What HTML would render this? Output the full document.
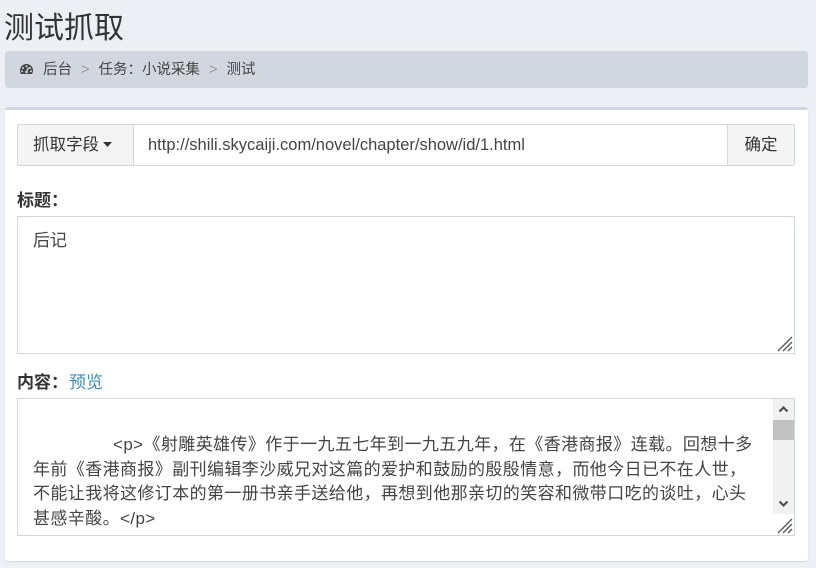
<!DOCTYPE html>
<html><head><meta charset="utf-8"><style>
*{box-sizing:border-box;margin:0;padding:0}
body{width:816px;height:568px;background:#ecf0f5;font-family:"Liberation Sans","Noto Sans CJK SC",sans-serif;color:#333;position:relative;overflow:hidden}
h1{position:absolute;left:4px;top:10px;font-size:30px;font-weight:normal;color:#333;line-height:38px}
.bc{position:absolute;left:5px;top:51px;width:803px;height:37px;background:#d2d6de;border-radius:3px;font-size:14.5px;color:#444;line-height:39px;padding-left:14px}
.bc .sep{color:#999;margin:0 9px}
.box{position:absolute;left:5px;top:107px;width:803px;height:454px;background:#fff;border-top:3px solid #d2d6de;border-radius:3px;box-shadow:0 1px 1px rgba(0,0,0,.1)}
.ig{position:absolute;left:12px;top:14px;width:778px;height:42px;border:1px solid #d2d6de;display:flex;font-size:16.5px;border-radius:2px}
.ig .l{width:116px;background:#f4f4f4;border-right:1px solid #d2d6de;line-height:40px;padding-left:15px}
.ig .m{flex:1;line-height:40px;padding-left:14px;color:#444}
.ig .r{width:67px;background:#f4f4f4;border-left:1px solid #d2d6de;line-height:40px;text-align:center}
.lab{position:absolute;left:12px;font-size:17px;font-weight:bold}
.ta{position:absolute;left:12px;width:778px;border:1px solid #d2d6de;font-size:17px;color:#444}
.grip{position:absolute;right:1px;bottom:1px}
.txt div{white-space:nowrap;height:24.7px;line-height:24.7px;letter-spacing:0.4px}
</style></head><body>
<h1>测试抓取</h1>
<div class="bc"><svg width="15" height="12" viewBox="0 0 14 12" style="vertical-align:-1px;margin-right:9px"><path d="M7 1A6.5 6.5 0 0 0 .5 7.5c0 1.3.4 2.5 1 3.5h11c.6-1 1-2.2 1-3.5A6.5 6.5 0 0 0 7 1z" fill="#444"/><circle cx="7" cy="3.3" r="1" fill="#d2d6de"/><circle cx="3.5" cy="5" r="1" fill="#d2d6de"/><circle cx="10.5" cy="5" r="1" fill="#d2d6de"/><circle cx="2.5" cy="8.3" r="1" fill="#d2d6de"/><circle cx="11.5" cy="8.3" r="1" fill="#d2d6de"/><path d="M7 9L9 4.5" stroke="#d2d6de" stroke-width="1.4"/><circle cx="7" cy="9" r="1.3" fill="#d2d6de"/></svg>后台<span class="sep">&gt;</span>任务：小说采集<span class="sep">&gt;</span>测试</div>
<div class="box">
<div class="ig"><div class="l">抓取字段<svg width="9" height="6" viewBox="0 0 9 6" style="margin-left:4px;vertical-align:2px"><path d="M0 0h9L4.5 5z" fill="#333"/></svg></div><div class="m">http://shili.skycaiji.com/novel/chapter/show/id/1.html</div><div class="r">确定</div></div>
<div class="lab" style="top:76px">标题：</div>
<div class="ta" style="top:106px;height:138px;padding:9px 15px">后记<svg class="grip" width="18" height="18" viewBox="0 0 18 18"><path d="M17 3L3 17M17 8L8 17M17 13L13 17" stroke="#555" stroke-width="1.3"/></svg></div>
<div class="lab" style="top:258px">内容：<span style="font-weight:normal;color:#3c8dbc;margin-left:1px">预览</span></div>
<div class="ta txt" style="top:288px;height:138px;overflow:hidden">
<div style="position:absolute;left:15px;top:34px">
<div style="padding-left:80px">&lt;p&gt;《射雕英雄传》作于一九五七年到一九五九年，在《香港商报》连载。回想十多</div>
<div>年前《香港商报》副刊编辑李沙威兄对这篇的爱护和鼓励的殷殷情意，而他今日已不在人世，</div>
<div>不能让我将这修订本的第一册书亲手送给他，再想到他那亲切的笑容和微带口吃的谈吐，心头</div>
<div>甚感辛酸。&lt;/p&gt;</div></div>
<div style="position:absolute;right:0;top:0;width:21px;height:115px;background:#f1f1f1">
<svg style="position:absolute;top:6px;left:5px" width="11" height="8" viewBox="0 0 11 8"><path d="M1.5 6.5L5.5 2.5L9.5 6.5" stroke="#505050" stroke-width="2.2" fill="none"/></svg>
<div style="position:absolute;top:21px;left:0;width:21px;height:20px;background:#c1c1c1"></div>
<svg style="position:absolute;bottom:6px;left:5px" width="11" height="8" viewBox="0 0 11 8"><path d="M1.5 1.5L5.5 5.5L9.5 1.5" stroke="#505050" stroke-width="2.2" fill="none"/></svg></div>
<svg class="grip" width="18" height="18" viewBox="0 0 18 18"><path d="M17 3L3 17M17 8L8 17M17 13L13 17" stroke="#555" stroke-width="1.3"/></svg></div>
</div>
</body></html>
